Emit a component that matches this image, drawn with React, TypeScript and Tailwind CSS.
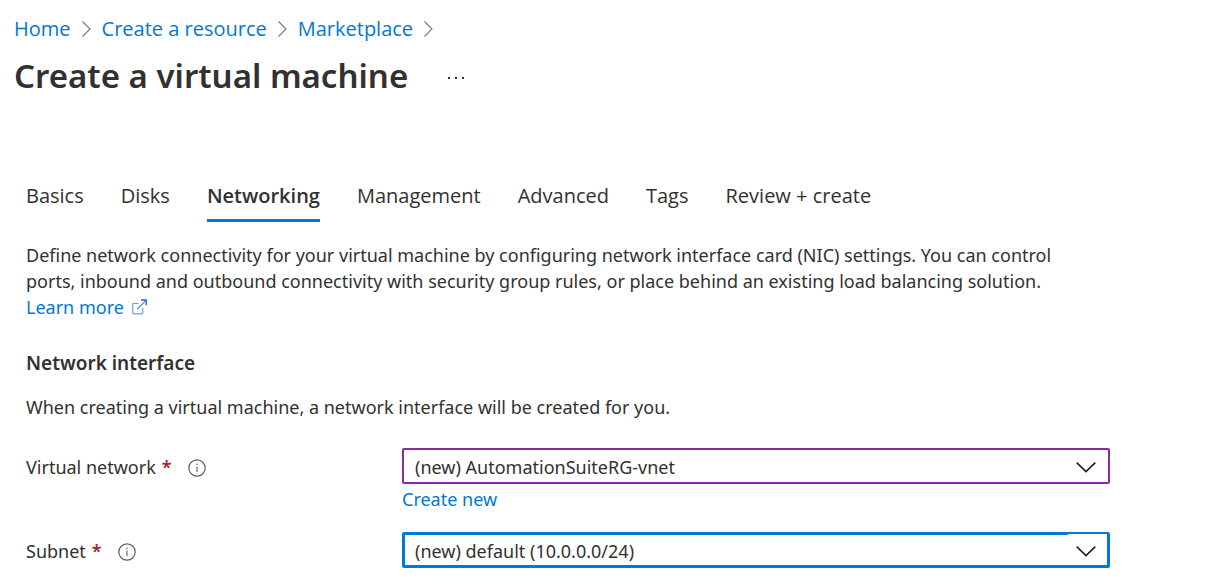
import React, { useState } from 'react';
import clsx from 'clsx';

const breadcrumbs = ['Home', 'Create a resource', 'Marketplace'];

const tabs = [
  'Basics',
  'Disks',
  'Networking',
  'Management',
  'Advanced',
  'Tags',
  'Review + create',
];

const Chevron = ({ className }: { className?: string }) => (
  <svg viewBox="0 0 20 11" fill="none" stroke="currentColor" className={className} aria-hidden="true">
    <path d="M0.7 0.7L10 9.6L19.3 0.7" strokeWidth="1.6" />
  </svg>
);

const BreadcrumbArrow = () => (
  <svg viewBox="0 0 9 16" fill="none" className="h-4 w-[9px] text-[#797775]" stroke="currentColor" aria-hidden="true">
    <path d="M0.5 0.5L8 8L0.5 15.5" strokeWidth="1.1" />
  </svg>
);

const ExternalIcon = () => (
  <svg viewBox="0 0 16 16" fill="none" className="h-4 w-4" aria-hidden="true">
    <path
      d="M6.5 4.5H1.7Q0.7 4.5 0.7 5.5V13.8Q0.7 14.8 1.7 14.8H9.6Q10.8 14.8 10.8 13.8V9"
      stroke="#6f9cf2"
      strokeWidth="1.2"
    />
    <path d="M5.2 10.2L13.6 1.8" stroke="#3f7be8" strokeWidth="1.1" />
    <path d="M9 1H14.2V6.2" stroke="#1f5fd0" strokeWidth="1.3" />
  </svg>
);

const InfoIcon = () => (
  <svg viewBox="0 0 18 18" fill="none" className="h-[18px] w-[18px] text-[#605e5c]" aria-hidden="true">
    <circle cx="9" cy="9" r="8.2" stroke="currentColor" strokeWidth="1.2" />
    <path d="M9 7.5V13" stroke="currentColor" strokeWidth="1.1" />
    <circle cx="9" cy="5.3" r="0.8" fill="currentColor" />
  </svg>
);

interface FieldProps {
  id: string;
  label: string;
  value: string;
  focused?: boolean;
  children?: React.ReactNode;
}

const Field = ({ id, label, value, focused, children }: FieldProps) => (
  <div className="grid grid-cols-[376px_1fr]">
    <div className="flex h-9 items-center pt-1">
      <label htmlFor={id} className="flex gap-[6px] pb-[2px]">
        {label} <span className="font-semibold text-[#a4262c]">*</span>
      </label>
      <button type="button" aria-label={`About ${label}`} className="ml-4">
        <InfoIcon />
      </button>
    </div>
    <div>
      <div className="relative">
        <select
          id={id}
          className={clsx(
            'block h-9 w-full appearance-none rounded-xs bg-white pt-px outline-none',
            focused ? 'border-[3px] border-[#0078d4] pl-[10px]' : 'border-2 border-[#8a2aa5] pl-[11px]'
          )}
        >
          <option>{value}</option>
        </select>
        {focused && <div className="absolute top-[2px] right-[3px] h-px w-[39px] bg-white" />}
        <Chevron className="pointer-events-none absolute top-[14px] right-[14px] h-[11px] w-5 text-[#201f1e]" />
      </div>
      {children}
    </div>
  </div>
);

export default function App() {
  const [activeTab, setActiveTab] = useState('Networking');

  return (
    <div className="min-h-screen bg-white font-['Noto_Sans',sans-serif] text-lg text-[#323130]">
      <header className="px-[14px] pt-[15px]">
        <nav
          aria-label="Breadcrumb"
          className="flex h-7 items-center gap-[11px] font-['Open_Sans',sans-serif] text-xl text-[#0078d4]"
        >
          {breadcrumbs.map((item) => (
            <React.Fragment key={item}>
              <a href="#">{item}</a>
              <BreadcrumbArrow />
            </React.Fragment>
          ))}
        </nav>
        <div className="mt-[11px] flex h-11 items-center gap-10">
          <h1 className="text-[33px] font-semibold">Create a virtual machine</h1>
          <button type="button" aria-label="More actions" className="flex gap-[5px] pt-1">
            <span className="size-[2px] bg-[#323130]" />
            <span className="size-[2px] bg-[#323130]" />
            <span className="size-[2px] bg-[#323130]" />
          </button>
        </div>
      </header>

      <main className="pt-[84px] pr-[95px] pl-[26px]">
        <div role="tablist" className="flex gap-[37px] font-['Open_Sans',sans-serif] text-xl">
          {tabs.map((tab) => (
            <button
              key={tab}
              type="button"
              role="tab"
              aria-selected={tab === activeTab}
              onClick={() => setActiveTab(tab)}
              className={clsx(
                'h-10 border-b-[3px] pb-3 leading-7 whitespace-nowrap',
                tab === activeTab ? 'border-[#0078d4] font-semibold' : 'border-transparent'
              )}
            >
              {tab}
            </button>
          ))}
        </div>

        <p className="mt-5 pr-8 leading-[26px]">
          Define network connectivity for your virtual machine by configuring network interface card
          (NIC) settings. You can control ports, inbound and outbound connectivity with security
          group rules, or place behind an existing load balancing solution.
          <br />
          <a href="#" className="inline-flex items-center gap-2 text-[#0078d4]">
            Learn more
            <ExternalIcon />
          </a>
        </p>

        <h2 className="mt-[30px] text-[19px] leading-[26px] font-semibold">Network interface</h2>
        <p className="mt-[18px] leading-[26px]">
          When creating a virtual machine, a network interface will be created for you.
        </p>

        <form className="mt-7 flex flex-col gap-[18px]">
          <Field id="vnet" label="Virtual network" value="(new) AutomationSuiteRG-vnet">
            <a href="#" className="block leading-[30px] text-[#0078d4]">
              Create new
            </a>
          </Field>
          <Field id="subnet" label="Subnet" value="(new) default (10.0.0.0/24)" focused />
        </form>
      </main>
    </div>
  );
}
